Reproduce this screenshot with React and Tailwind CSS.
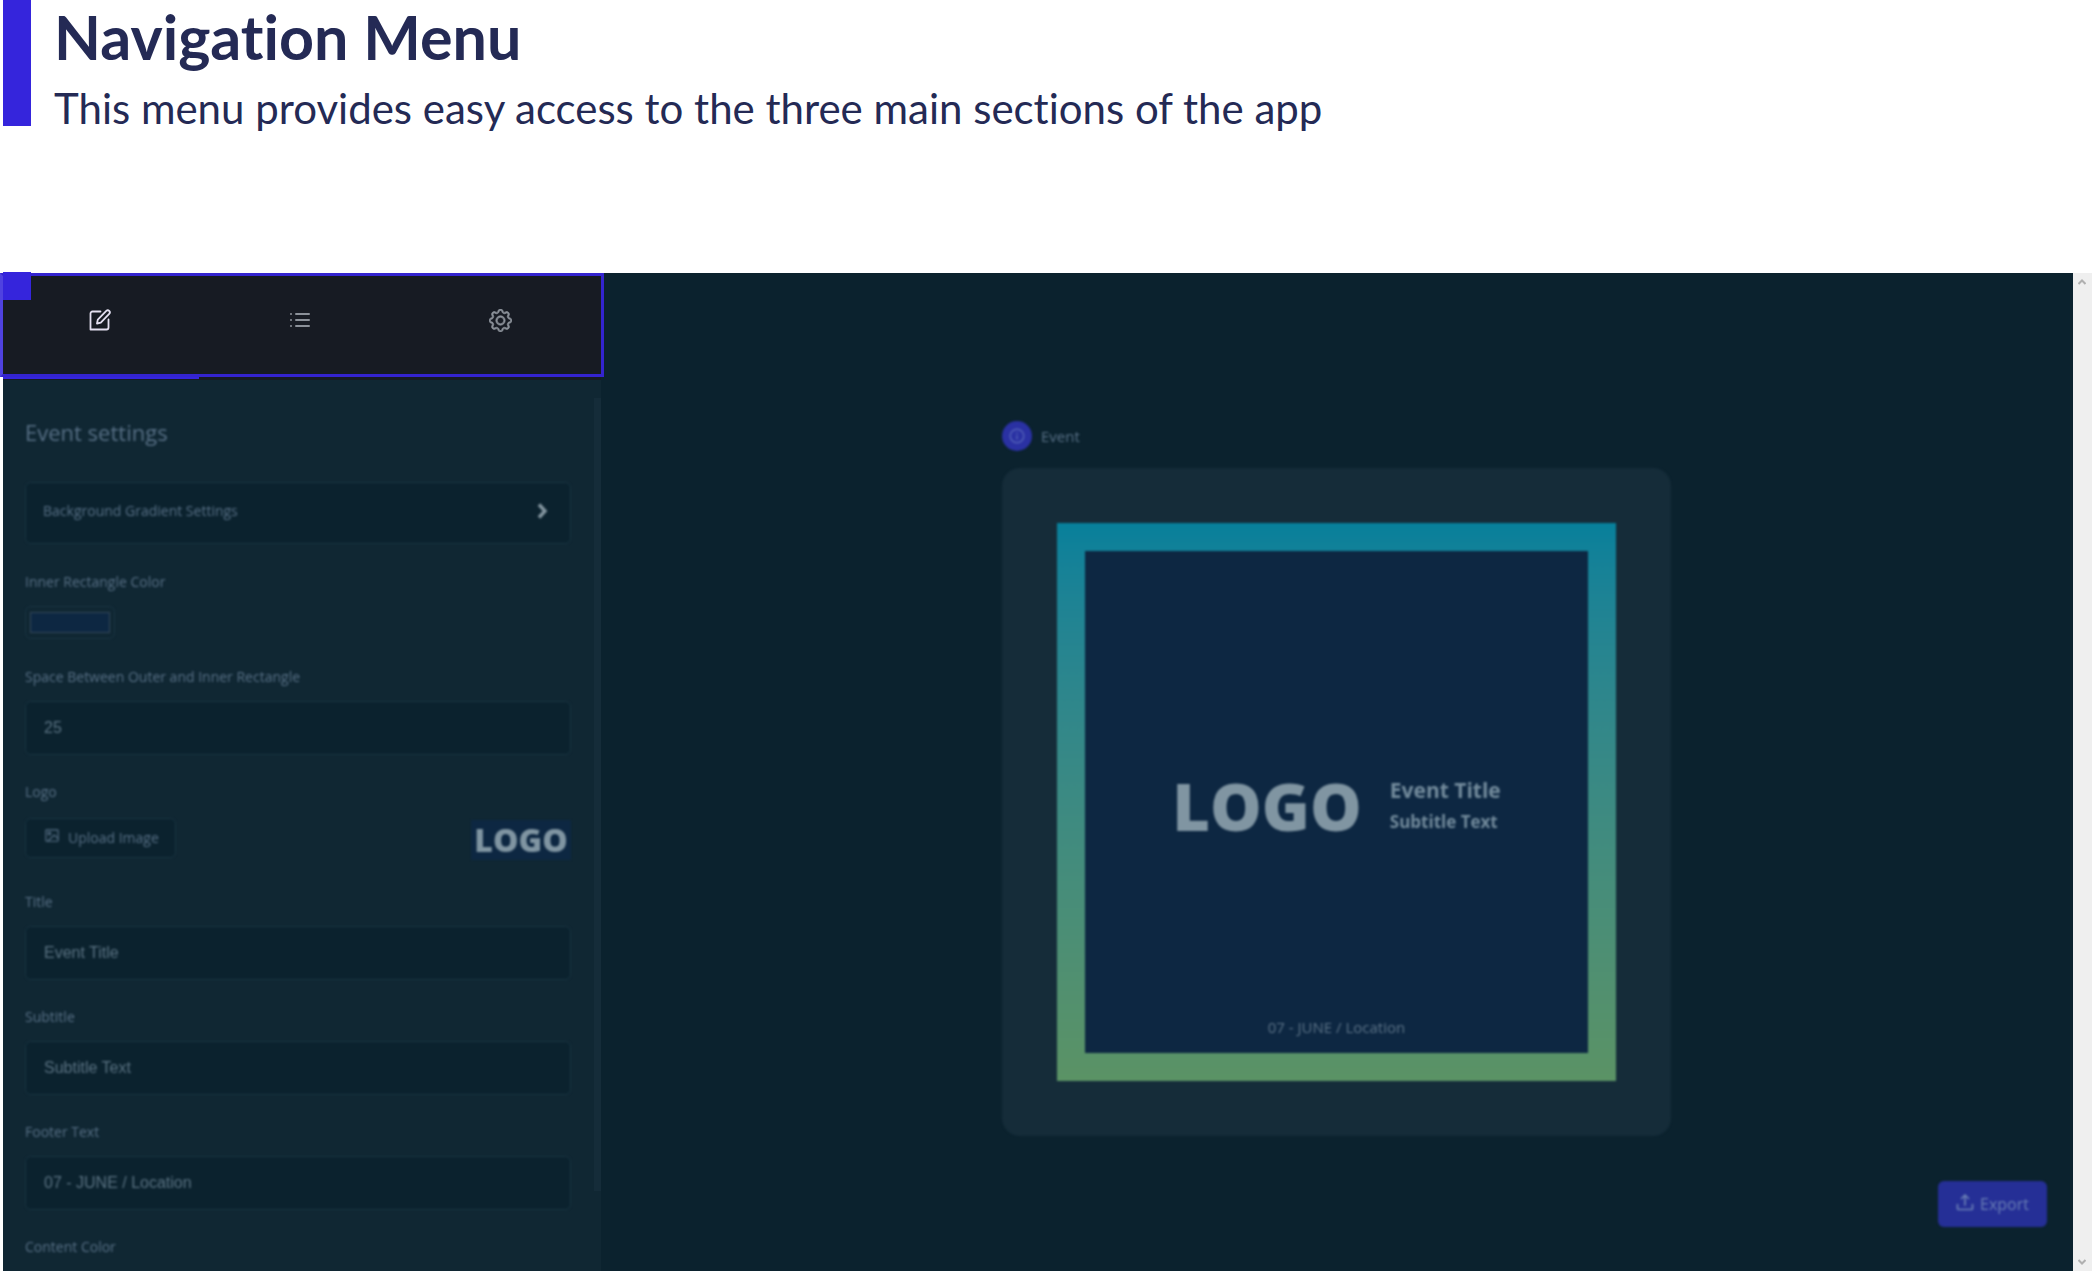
import { useState } from "react";
import { BsGear } from "react-icons/bs";

const fieldLabel = "block text-sm leading-5 text-[#587086]";
const fieldBox =
  "block h-[54px] w-full rounded-md border border-[#1a3442] bg-[#0b222e] px-[18px] font-['Liberation_Sans',sans-serif] text-[16px] text-[#5a7282] outline-none";

function EditIcon() {
  return (
    <svg viewBox="0 0 24 24" className="size-6" fill="none" stroke="currentColor" strokeWidth="1.8" strokeLinejoin="round" strokeLinecap="round">
      <path d="M12.5 3.5H4.5a2 2 0 0 0-2 2V21.500H18.500a2 2 0 0 0 2-2V11.500" />
      <path d="M9 15.500 9.800 11.600 18.300 2.900a2 2 0 0 1 2.900 2.900L12.800 14.600Z" />
    </svg>
  );
}

function ListIcon() {
  return (
    <svg viewBox="0 0 22 16" className="h-4 w-[22px]" fill="currentColor">
      {[1, 7, 13].map((y) => (
        <g key={y}>
          <rect x="1" y={y} width="2" height="2" rx="1" />
          <rect x="6" y={y} width="15" height="2" rx="1" />
        </g>
      ))}
    </svg>
  );
}

function ImageIcon() {
  return (
    <svg viewBox="0 0 16 16" className="mb-1 size-[14px]" fill="none" stroke="currentColor" strokeWidth="1.300">
      <rect x="1" y="1" width="14" height="13" rx="1" />
      <circle cx="5" cy="5" r="1.500" />
      <path d="M3 14 10.500 7 15 11" />
    </svg>
  );
}

function UploadIcon() {
  return (
    <svg viewBox="0 0 18 18" className="mb-1 size-[18px]" fill="none" stroke="currentColor" strokeWidth="1.700" strokeLinecap="round" strokeLinejoin="round">
      <path d="M9 12V2M5.500 5.500 9 2l3.500 3.500M1.500 11.500V15.500a1 1 0 0 0 1 1H15.500a1 1 0 0 0 1-1V11.500" />
    </svg>
  );
}

function InfoIcon() {
  return (
    <svg viewBox="0 0 16 16" className="size-4" fill="none" stroke="currentColor" strokeWidth="1.400">
      <circle cx="8" cy="8" r="6.800" />
      <path d="M8 7.200V11.500M8 4.500V6" />
    </svg>
  );
}

function TextField({ id, label, value, onChange }) {
  return (
    <div className="flex flex-col gap-[14px]">
      <label htmlFor={id} className={fieldLabel}>{label}</label>
      <input id={id} type="text" value={value} onChange={(e) => onChange(e.target.value)} className={fieldBox} />
    </div>
  );
}

function Tab({ label, active, children }) {
  return (
    <button type="button" aria-label={label} className={active ? "flex flex-1 items-center justify-center text-[#e3dff0]" : "flex flex-1 items-center justify-center text-[#8b9199]"}>
      {children}
    </button>
  );
}

export default function App() {
  const [space, setSpace] = useState("25");
  const [title, setTitle] = useState("Event Title");
  const [subtitle, setSubtitle] = useState("Subtitle Text");
  const [footer, setFooter] = useState("07 - JUNE / Location");
  const [color, setColor] = useState("#0d2742");

  return (
    <div className="flex h-screen flex-col overflow-hidden bg-white font-['Open_Sans','Noto_Sans',sans-serif]">
      <header className="ml-[3px] flex h-[126px] flex-none border-l-[28px] border-[#3525dc] pl-[23px] font-[Lato,sans-serif] text-[#242a55] [font-variant-ligatures:none]">
        <div>
          <h1 className="text-[61px] leading-[74px] font-bold">Navigation Menu</h1>
          <p className="pt-[9px] text-[42px] leading-[50px] whitespace-nowrap">This menu provides easy access to the three main sections of the app</p>
        </div>
      </header>

      <div className="mt-[147px] flex min-h-0 flex-1">
        <aside className="flex w-[601px] flex-none flex-col">
          <nav className="relative z-10 -mr-[3px] flex h-[104px] flex-none border-[3px] border-[#3424cf] border-l-[#4f42e0] bg-[#171b23] pb-[10px]">
            <span className="absolute -top-1 left-0 size-7 bg-[#3525dc]" />
            <div className="-ml-[3px] flex flex-1">
              <Tab label="Edit" active><EditIcon /></Tab>
              <Tab label="List"><ListIcon /></Tab>
              <Tab label="Settings"><BsGear className="size-[23px]" strokeWidth="0.500" /></Tab>
            </div>
          </nav>
          <div className="ml-[3px] h-[3px] flex-none bg-[#171b23]">
            <div className="h-[2px] w-[196px] bg-[#3525dc]" />
          </div>
          <div className="ml-[3px] flex min-h-0 flex-1 justify-between overflow-hidden bg-[#102733]">
            <form className="ml-[22px] w-[546px] blur-[1px]">
              <h2 className="mt-9 text-[22px] leading-8 text-[#587086]">Event settings</h2>
              <button type="button" className="mt-[34px] flex h-[62px] w-full items-center justify-between rounded-md border border-[#1a3442] bg-[#0b222e] pr-[22px] pb-1 pl-[17px] text-sm text-[#587086]">
                Background Gradient Settings
                <svg viewBox="0 0 12 16" className="h-4 w-3 text-[#8496a0]" fill="none" stroke="currentColor" strokeWidth="3.500">
                  <path d="M3 1.500 9 8 3 14.500" />
                </svg>
              </button>

              <label htmlFor="inner-color" className={`${fieldLabel} mt-7`}>Inner Rectangle Color</label>
              <div className="mt-[14px] h-[33px] w-[90px] rounded-md border border-[#1a3442] px-1 py-[5px]">
                <input
                  id="inner-color"
                  type="color"
                  value={color}
                  onChange={(e) => setColor(e.target.value)}
                  className="block h-[21px] w-full appearance-none border border-[#34475a] p-0 [&::-webkit-color-swatch]:border-0 [&::-webkit-color-swatch-wrapper]:p-0"
                />
              </div>

              <div className="mt-[28px]">
                <TextField id="space" label="Space Between Outer and Inner Rectangle" value={space} onChange={setSpace} />
              </div>

              <div className="mt-[27px]">
                <span className={fieldLabel}>Logo</span>
                <div className="mt-4 flex items-start justify-between">
                  <button type="button" className="flex h-10 w-[151px] items-center gap-[9px] rounded-md border border-[#1a3442] bg-[#0b222e] pl-[19px] text-sm text-[#587086]">
                    <ImageIcon />
                    Upload Image
                  </button>
                  <div className="mt-[2px] flex h-10 w-[100px] items-center justify-center bg-[#0d2742] text-[32px] font-extrabold text-[#8095a2]">LOGO</div>
                </div>
              </div>

              <div className="mt-[32px] flex flex-col gap-[27px]">
                <TextField id="title" label="Title" value={title} onChange={setTitle} />
                <TextField id="subtitle" label="Subtitle" value={subtitle} onChange={setSubtitle} />
                <TextField id="footer" label="Footer Text" value={footer} onChange={setFooter} />
                <span className={fieldLabel}>Content Color</span>
              </div>
            </form>
            <div className="mt-[18px] h-[793px] w-[7px] bg-[#152c39]" />
          </div>
        </aside>

        <main className="flex min-w-0 flex-1 flex-col bg-[#0b222e] pr-px">
          <section className="mx-auto mt-[148px] w-[669px] blur-[1px]">
            <div className="flex items-center gap-[9px] text-[15px] text-[#587086]">
              <span className="flex size-[30px] items-center justify-center rounded-full bg-[#2a31a3] text-[#5260b8]"><InfoIcon /></span>
              Event
            </div>
            <div className="mt-[17px] rounded-[18px] bg-[#152c39] p-[55px]">
              <div className="bg-linear-to-b from-[#07809b] to-[#5b9365] p-7">
                <div className="flex h-[502px] flex-col bg-[#0d2742]">
                  <div className="flex flex-1 items-center justify-center gap-7 pt-[45px]">
                    <span className="text-[65px] leading-[66px] font-extrabold text-[#8095a2]">LOGO</span>
                    <div className="font-bold text-[#738b9c]">
                      <p className="text-[21px] leading-8">{title}</p>
                      <p className="text-[17px] leading-8">{subtitle}</p>
                    </div>
                  </div>
                  <p className="pb-[14px] text-center text-[15px] leading-6 text-[#5b7286]">{footer}</p>
                </div>
              </div>
            </div>
          </section>
          <button type="button" className="mt-auto mr-[25px] mb-11 flex h-[46px] w-[109px] items-center justify-center gap-[6px] self-end rounded-md bg-[#252f96] text-[16px] text-[#6a7fb5] blur-[1px]">
            <UploadIcon />
            Export
          </button>
        </main>

        <div className="flex w-[19px] flex-none flex-col items-center justify-between bg-[#efefef] py-[6px] pr-[2px] text-[#b0b0b0]">
          <svg viewBox="0 0 8 6" className="h-[6px] w-2" fill="none" stroke="currentColor" strokeWidth="2"><path d="M0.500 5 4 1.500 7.500 5" /></svg>
          <svg viewBox="0 0 8 6" className="h-[6px] w-2" fill="none" stroke="currentColor" strokeWidth="2"><path d="M0.500 1 4 4.500 7.500 1" /></svg>
        </div>
      </div>
    </div>
  );
}
